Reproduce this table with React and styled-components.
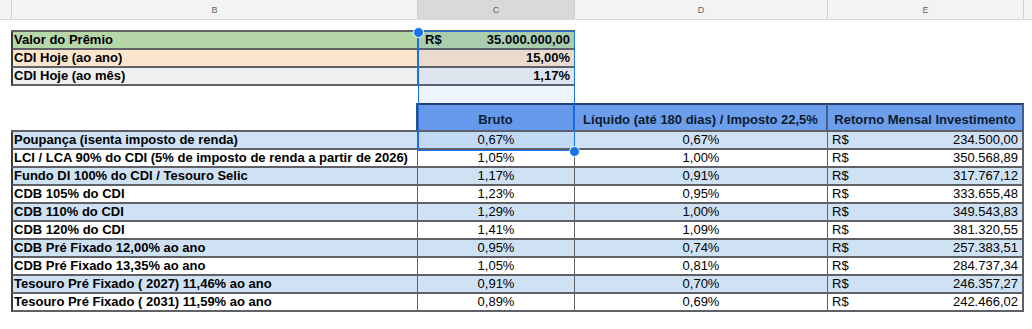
import React from "react";
import styled, { createGlobalStyle } from "styled-components";

const GlobalStyle = createGlobalStyle`
  html, body { margin: 0; padding: 0; background: #ffffff; }
  body { font-family: "Liberation Sans", Arial, sans-serif; }
`;

const LINE = "#5f6166";

const summary = [
  { label: "Valor do Prêmio", prefix: "R$", value: "35.000.000,00", bg: "#b6d7a8" },
  { label: "CDI Hoje (ao ano)", value: "15,00%", bg: "#fce5cd" },
  { label: "CDI Hoje (ao mês)", value: "1,17%", bg: "#efefef" },
];

const rows = [
  ["Poupança (isenta imposto de renda)", "0,67%", "0,67%", "234.500,00"],
  ["LCI / LCA 90% do CDI (5% de imposto de renda a partir de 2026)", "1,05%", "1,00%", "350.568,89"],
  ["Fundo DI 100% do CDI / Tesouro Selic", "1,17%", "0,91%", "317.767,12"],
  ["CDB 105% do CDI", "1,23%", "0,95%", "333.655,48"],
  ["CDB 110% do CDI", "1,29%", "1,00%", "349.543,83"],
  ["CDB 120% do CDI", "1,41%", "1,09%", "381.320,55"],
  ["CDB Pré Fixado 12,00% ao ano", "0,95%", "0,74%", "257.383,51"],
  ["CDB Pré Fixado 13,35% ao ano", "1,05%", "0,81%", "284.737,34"],
  ["Tesouro Pré Fixado ( 2027) 11,46% ao ano", "0,91%", "0,70%", "246.357,27"],
  ["Tesouro Pré Fixado ( 2031) 11,59% ao ano", "0,89%", "0,69%", "242.466,02"],
];

export default function App() {
  return (
    <>
      <GlobalStyle />
      <Sheet>
        <ColumnBar>
          <ColHead />
          <ColHead>B</ColHead>
          <ColHead $selected>C</ColHead>
          <ColHead>D</ColHead>
          <ColHead>E</ColHead>
          <ColHead $rest />
        </ColumnBar>
        <Body>
          <Summary>
            {summary.map((s) => (
              <Row key={s.label} $h={18}>
                <Label $bg={s.bg}>{s.label}</Label>
                <Money $bg={s.bg} $bold>
                  <span>{s.prefix}</span>
                  <span>{s.value}</span>
                </Money>
              </Row>
            ))}
          </Summary>
          <Row $h={17} />
          <HeadRow>
            <Blank />
            <HeadCell>Bruto</HeadCell>
            <HeadCell>Líquido (até 180 dias) / Imposto 22,5%</HeadCell>
            <HeadCell>Retorno Mensal Investimento</HeadCell>
          </HeadRow>
          {rows.map((r, i) => {
            const bg = i % 2 === 0 ? "#cfe2f3" : "#ffffff";
            return (
              <Row key={r[0]} $h={18}>
                <Label $bg={bg}>{r[0]}</Label>
                <Value $bg={bg}>{r[1]}</Value>
                <Value $bg={bg}>{r[2]}</Value>
                <Money $bg={bg} $last>
                  <span>R$</span>
                  <span>{r[3]}</span>
                </Money>
              </Row>
            );
          })}
          <Selection>
            <Handle $pos="start" />
            <Handle $pos="end" />
          </Selection>
        </Body>
      </Sheet>
    </>
  );
}

const Sheet = styled.div`
  width: 1032px;
  height: 329px;
  overflow: hidden;
  background: #ffffff;
  color: #000000;
`;

const ColumnBar = styled.div`
  display: grid;
  grid-template-columns: 12px 406px 157px 253px 196px 1fr;
  height: 20px;
  background: #f3f3f3;
  border-bottom: 1px solid #d6d6d6;
  box-sizing: border-box;
`;

const ColHead = styled.div`
  display: flex;
  align-items: center;
  justify-content: center;
  border-right: ${(p) => (p.$rest ? "none" : "1px solid #cfcfcf")};
  background: ${(p) => (p.$selected ? "#d9d9d9" : "transparent")};
  font-family: "Liberation Sans", Arial, sans-serif;
  font-size: 9px;
  color: #5f6368;
`;

const Body = styled.div`
  position: relative;
  padding-top: 10px;
`;

const Summary = styled.div`
  border-top: 2px solid ${LINE};
  width: 564px;
  margin-left: 11px;
  & > div {
    margin-left: 0;
  }
`;

const Row = styled.div`
  display: grid;
  grid-template-columns: 407px 157px 253px 196px;
  height: ${(p) => p.$h}px;
  margin-left: 11px;
`;

const Cell = styled.div`
  box-sizing: border-box;
  height: 100%;
  background: ${(p) => p.$bg || "transparent"};
  border-bottom: 2px solid ${LINE};
  border-right: 1px solid ${LINE};
  font-size: 13px;
  line-height: 16px;
  white-space: nowrap;
  overflow: hidden;
`;

const Label = styled(Cell)`
  border-left: 2px solid #3c3c3c;
  padding-left: 1px;
  font-weight: 700;
`;

const Value = styled(Cell)`
  text-align: center;
`;

const Money = styled(Cell)`
  display: flex;
  justify-content: space-between;
  padding: 0 4px;
  font-weight: ${(p) => (p.$bold ? 700 : 400)};
  padding-left: ${(p) => (p.$bold ? "7px" : "4px")};
  border-right: ${(p) => (p.$last ? "2px" : "1px")} solid ${LINE};
`;

const HeadRow = styled.div`
  display: grid;
  grid-template-columns: 407px 157px 253px 196px;
  height: 29px;
  margin-left: 11px;
`;

const Blank = styled.div`
  border-right: 2px solid #2f4f7f;
  border-bottom: 2px solid ${LINE};
`;

const HeadCell = styled.div`
  box-sizing: border-box;
  display: flex;
  align-items: flex-end;
  justify-content: center;
  padding-bottom: 2px;
  background: #6d9eeb;
  border-top: 2px solid #23406e;
  border-bottom: 2px solid ${LINE};
  border-right: 2px solid #3f5f8f;
  font-size: 13px;
  font-weight: 700;
  line-height: 16px;
  color: #0d1b2e;
  white-space: nowrap;
`;

const Selection = styled.div`
  position: absolute;
  left: 418px;
  top: 11px;
  width: 157px;
  height: 120px;
  box-sizing: border-box;
  border: 1px solid #1a73e8;
  background: rgba(14, 101, 235, 0.07);
  pointer-events: none;
`;

const Handle = styled.div`
  position: absolute;
  width: 9px;
  height: 9px;
  border-radius: 50%;
  background: #1a73e8;
  border: 1px solid #ffffff;
  left: ${(p) => (p.$pos === "start" ? "-6px" : "150px")};
  top: ${(p) => (p.$pos === "start" ? "-5px" : "114px")};
`;
